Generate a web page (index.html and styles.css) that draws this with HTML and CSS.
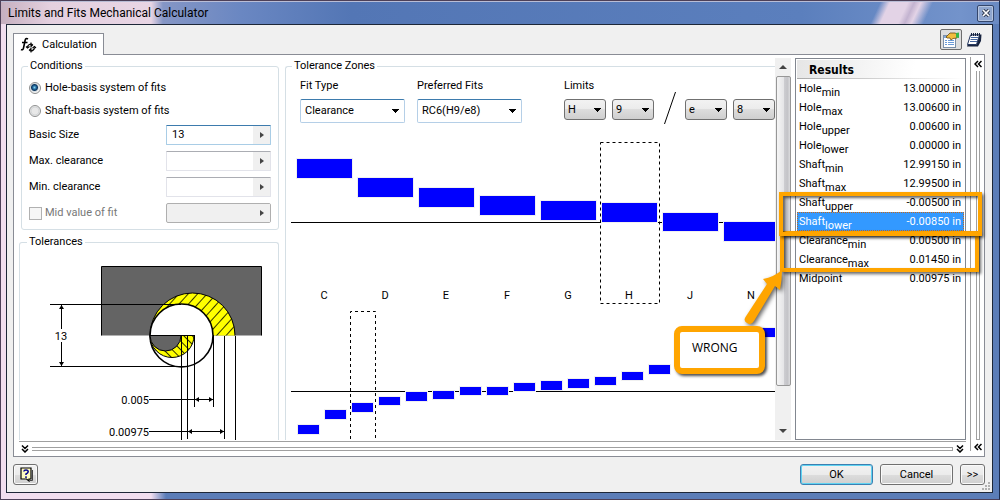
FILE: index.html
```
<!DOCTYPE html>
<html lang="en">
<head>
<meta charset="utf-8">
<title>Limits and Fits Mechanical Calculator</title>
<link rel="stylesheet" href="styles.css">
</head>
<body>
<div class="window">
  <header class="titlebar">
    <h1 class="title">Limits and Fits Mechanical Calculator</h1>
    <button class="close" aria-label="Close"><svg width="8" height="8" viewBox="0 0 8 8"><path d="M1 1L7 7M7 1L1 7" stroke="#333c50" stroke-width="3.4"/><path d="M1 1L7 7M7 1L1 7" stroke="#fff" stroke-width="1.6"/></svg></button>
  </header>

  <div class="dialog">
    <div class="tabrow">
      <button class="tab">
        <svg width="17" height="16" viewBox="0 0 17 16" fill="none" stroke="#000"><path d="M8 2Q5.500 .5 5 4L3.500 11Q3 13.500 1 12.500M2 5.500H7.500" stroke-width="1.600"/><path d="M7.500 10A3.500 3.500 0 0 1 12.500 7.500M14.500 10.500A3.500 3.500 0 0 1 9.500 13.500" stroke-width="1.300"/><path d="M6 9.500L7.500 11L9.500 9.500M12.500 11L14.500 9.500L16 11M11 5.500V9.500L13 7.500M11 15.500V11.500L9 13.500" stroke-width="1.100"/></svg>
        <span>Calculation</span>
      </button>
      <div class="tools">
        <button class="tool pressed" aria-label="Show results"><svg width="18" height="16" viewBox="0 0 18 16"><rect x="1.500" y="3.500" width="12" height="12" fill="#fff" stroke="#7b8fa8"/><rect x="2" y="4" width="11" height="2" fill="#84a8d8"/><path d="M3 8.500H5M3 10.500H5M3 12.500H5M6 8.500H12M6 10.500H12M6 12.500H12" stroke="#6b9bd8"/><path d="M4 5L8 1L13 1L15 2V6L11 6.500L9 8L8 6H5Z" fill="#f2bd3e" stroke="#6b4a10" stroke-width=".8"/><path d="M14 1L17 .5V6L14 5.500Z" fill="#35b54a"/></svg></button>
        <button class="tool" aria-label="Report"><svg width="16" height="16" viewBox="0 0 16 16"><path d="M5 2.500H15.500L15 9L12 14.500H1Z" fill="#17233f"/><path d="M4.500 3H13.500L10.500 12.500H1.500Z" fill="#fff" stroke="#25375f"/><path d="M5 5.500H12M4.500 7.500H11.500M4 9.500H11" stroke="#46669e"/><path d="M5.500 1V4M7.500 1V4M9.500 1V4M11.500 1V4M13.500 1V4" stroke="#17233f"/></svg></button>
      </div>
    </div>

    <main class="page">
      <div class="work">
        <div class="columns">
          <div class="left">
            <fieldset class="group conditions">
              <legend>Conditions</legend>
              <label class="choice"><input type="radio" name="basis" checked>Hole-basis system of fits</label>
              <label class="choice"><input type="radio" name="basis">Shaft-basis system of fits</label>
              <div class="field"><label for="basic">Basic Size</label><span class="edit active"><input id="basic" type="text" value="13"><button aria-label="Basic size options"></button></span></div>
              <div class="field"><label for="maxc">Max. clearance</label><span class="edit"><input id="maxc" type="text"><button aria-label="Max clearance options"></button></span></div>
              <div class="field"><label for="minc">Min. clearance</label><span class="edit"><input id="minc" type="text"><button aria-label="Min clearance options"></button></span></div>
              <div class="field off"><label class="check"><input type="checkbox" disabled>Mid value of fit</label><span class="edit"><input type="text" aria-label="Mid value" disabled><button aria-label="Mid value options" disabled></button></span></div>
            </fieldset>
            <fieldset class="group tolerances">
              <legend>Tolerances</legend>
              <svg class="drawing" width="240" height="191" viewBox="29 250 240 191" role="img" aria-label="Tolerance diagram">
                <defs>
                  <pattern id="hatchA" width="7" height="7" patternUnits="userSpaceOnUse" patternTransform="rotate(42)"><rect width="7" height="7" fill="#ff0"/><path d="M0 0V7" stroke="#000" stroke-width="1.600"/></pattern>
                  <pattern id="hatchB" width="6" height="6" patternUnits="userSpaceOnUse" patternTransform="rotate(-45)"><rect width="6" height="6" fill="#ff0"/><path d="M0 0V6" stroke="#000" stroke-width="1.600"/></pattern>
                </defs>
                <path d="M101.500 335.500V266.500H261.500V335.500" fill="#646464" stroke="#000"/>
                <path d="M150 335.500A42.500 42.500 0 0 1 235 335.500Z" fill="url(#hatchA)"/>
                <path d="M150 335.500A42.500 42.500 0 0 1 235 335.500" fill="none" stroke="#000"/>
                <circle cx="181.500" cy="335.500" r="31.500" fill="#fff" stroke="#000" stroke-width="1.600"/>
                <path d="M150 335.500A22 22 0 0 0 194 335.500Z" fill="url(#hatchB)" stroke="#000"/>
                <path d="M150 335.500A15.500 15.500 0 0 0 181 335.500Z" fill="#646464" stroke="#000"/>
                <path d="M50 304.500H181M50 366.500H187M61.500 305V329M61.500 342V366M181.500 335V441M187.500 335V439M194.500 335V407M213.500 335V407M224.500 336V439M235.500 336V441M149 399.500H213M149 431.500H224" fill="none" stroke="#000"/>
                <path d="M61.500 305L59 309H64ZM61.500 366L59 362H64ZM195 399.500L199 397V402ZM213 399.500L209 397V402ZM188 431.500L192 429V434ZM224 431.500L220 429V434Z"/>
                <text x="61" y="340" text-anchor="middle">13</text>
                <text x="149" y="404" text-anchor="end">0.005</text>
                <text x="149" y="436" text-anchor="end">0.00975</text>
              </svg>
            </fieldset>
          </div>

          <fieldset class="group zones">
            <legend>Tolerance Zones</legend>
            <div class="pickers">
              <label class="pick wide">Fit Type<select><option>Clearance</option></select></label>
              <label class="pick wide">Preferred Fits<select><option>RC6(H9/e8)</option></select></label>
              <div class="pick limits"><span>Limits</span>
                <div class="limitrow">
                  <select aria-label="Hole zone"><option>H</option></select>
                  <select aria-label="Hole grade"><option>9</option></select>
                  <svg class="slash" width="12" height="32" viewBox="0 0 12 32"><path d="M.5 32L11.500 0" stroke="#000"/></svg>
                  <select aria-label="Shaft zone"><option>e</option></select>
                  <select aria-label="Shaft grade"><option>8</option></select>
                </div>
              </div>
            </div>
            <svg class="chart" width="484" height="301" viewBox="291 140 484 301" role="img" aria-label="Hole and shaft tolerance zones">
              <path d="M291 222.500H775M291 391.500H775" stroke="#000"/>
              <path d="M600.500 142.500H659.500V303.500H600.500ZM350.500 445V311.500H375.500V445" fill="none" stroke="#000" stroke-dasharray="3 3"/>
              <g fill="#00f" stroke="#f0f0f0" stroke-width="2" paint-order="stroke">
                <rect x="297" y="159" width="55" height="19"/><rect x="358" y="178" width="55" height="19"/><rect x="419" y="188" width="55" height="19"/><rect x="480" y="196" width="55" height="19"/><rect x="541" y="201" width="55" height="19"/><rect x="602" y="203" width="55" height="19"/><rect x="663" y="213" width="55" height="18"/><rect x="724" y="222" width="55" height="19"/>
                <rect x="298" y="425" width="21" height="9"/><rect x="325" y="410" width="21" height="9"/><rect x="352" y="403" width="21" height="9"/><rect x="379" y="397" width="21" height="8"/><rect x="406" y="392" width="21" height="9"/><rect x="433" y="391" width="21" height="8"/><rect x="460" y="387" width="21" height="8"/><rect x="487" y="387" width="21" height="8"/><rect x="514" y="383" width="21" height="8"/><rect x="541" y="381" width="21" height="9"/><rect x="568" y="379" width="21" height="9"/><rect x="595" y="377" width="21" height="8"/><rect x="622" y="372" width="21" height="8"/><rect x="649" y="365" width="21" height="9"/><rect x="757" y="328" width="21" height="9"/>
              </g>
              <g text-anchor="middle"><text x="324" y="299">C</text><text x="385" y="299">D</text><text x="446" y="299">E</text><text x="507" y="299">F</text><text x="568" y="299">G</text><text x="629" y="299">H</text><text x="690" y="299">J</text><text x="751" y="299">N</text></g>
            </svg>
          </fieldset>

          <div class="scrollbar" aria-hidden="true"><i class="up"></i><div class="thumb"></div><i class="down"></i></div>

          <section class="results">
            <h2>Results</h2>
            <table>
              <tr><th>Hole<sub>min</sub></th><td>13.00000 in</td></tr>
              <tr><th>Hole<sub>max</sub></th><td>13.00600 in</td></tr>
              <tr><th>Hole<sub>upper</sub></th><td>0.00600 in</td></tr>
              <tr><th>Hole<sub>lower</sub></th><td>0.00000 in</td></tr>
              <tr><th>Shaft<sub>min</sub></th><td>12.99150 in</td></tr>
              <tr><th>Shaft<sub>max</sub></th><td>12.99500 in</td></tr>
              <tr><th>Shaft<sub>upper</sub></th><td>-0.00500 in</td></tr>
              <tr class="selected"><th>Shaft<sub>lower</sub></th><td>-0.00850 in</td></tr>
              <tr><th>Clearance<sub>min</sub></th><td>0.00500 in</td></tr>
              <tr><th>Clearance<sub>max</sub></th><td>0.01450 in</td></tr>
              <tr><th>Midpoint</th><td>0.00975 in</td></tr>
            </table>
          </section>
        </div>
        <div class="hsplit">
          <svg width="8" height="8" viewBox="0 0 8 8"><path d="M1 .5L4 3.500L7 .5M1 4L4 7L7 4" fill="none" stroke="#000" stroke-width="1.500"/></svg>
          <span class="hgrip"></span>
          <svg width="8" height="8" viewBox="0 0 8 8"><path d="M1 .5L4 3.500L7 .5M1 4L4 7L7 4" fill="none" stroke="#000" stroke-width="1.500"/></svg>
        </div>
      </div>
      <div class="vsplit">
        <svg width="8" height="8" viewBox="0 0 8 8"><path d="M4 1L1 4L4 7M7.500 1L4.500 4L7.500 7" fill="none" stroke="#000" stroke-width="1.500"/></svg>
        <span class="vgrip"></span>
        <svg width="8" height="8" viewBox="0 0 8 8"><path d="M4 1L1 4L4 7M7.500 1L4.500 4L7.500 7" fill="none" stroke="#000" stroke-width="1.500"/></svg>
      </div>
    </main>

    <footer class="footer">
      <button class="btn help" aria-label="Help"><svg width="14" height="15" viewBox="0 0 14 15"><path d="M2 1H12V12H10V14L7.500 12H2Z" fill="#fffbc0" stroke="#000" stroke-width="1.200"/><path d="M13.500 3V13.500H11" fill="none" stroke="#444"/><path d="M4.800 4.500Q5 3 7 3Q9.200 3 9.200 4.800Q9.200 6 7 7V8M7 9.300V11" fill="none" stroke="#000090" stroke-width="1.500"/></svg></button>
      <span class="space"></span>
      <button class="btn ok">OK</button>
      <button class="btn">Cancel</button>
      <button class="btn more">&gt;&gt;</button>
      <svg class="grip" width="8" height="8" viewBox="0 0 8 8" fill="#b0b0b0"><path d="M6 0h2v2h-2zM3 3h2v2h-2zM6 3h2v2h-2zM0 6h2v2h-2zM3 6h2v2h-2zM6 6h2v2h-2z"/></svg>
    </footer>
  </div>

  <div class="mark mark-clearance"></div>
  <div class="mark mark-shaft"></div>
  <svg class="arrow" width="50" height="60" viewBox="740 268 50 60"><path d="M745.500 317L767 284L763 279Q774 277 782 270Q782 280 780 290L775 286L754 321Q751 326 747 323Q743 321 745.500 317Z" fill="#ffa500"/></svg>
  <div class="callout">WRONG</div>
</div>
</body>
</html>
```
FILE: styles.css
```
* { box-sizing: border-box; }
body {
  margin: 0;
  font: 11px/14px Roboto, "Liberation Sans", sans-serif;
  color: #000;
}
button, input, select { font: inherit; color: inherit; }
button { padding: 0; border: 0; background: none; }
svg { display: block; flex: none; }

.window {
  position: relative;
  display: flex;
  flex-direction: column;
  height: 100vh;
  padding: 0 6px 6px 5px;
  overflow: hidden;
  border: 1px solid #4d4058;
  border-right-color: #1c2c50;
  background: linear-gradient(90deg, #f1deef 0, #f1deef 150px, #5b7db8 165px, #5b7db8 100%);
}
.titlebar {
  display: flex;
  align-items: center;
  justify-content: space-between;
  height: 23px;
  margin: 0 -6px 0 -5px;
  padding: 0 5px 0 7px;
  border-top: 1px solid #b9bdd6;
  background:
    linear-gradient(115deg, transparent 797px, #e3d3e6 806px, #e3d3e6 822px, #c3b3d0 828px, #e3d3e6 834px, transparent 845px),
    linear-gradient(90deg, #c6b0c0 0, #e4d0df 50px, #e8d5e4 150px, #8596c5 162px, #6a87c2 240px, #5376b5 350px, #5b7fbd 800px, #7393cb 960px, #6a8ac3 100%);
}
.title { margin: 0; font-weight: normal; font-size: 12px; line-height: 16px; }
.close {
  display: grid;
  place-items: center;
  width: 17px;
  height: 17px;
  border: 1px solid #34466c;
  border-radius: 2px;
  background: #8fa6cf;
  box-shadow: inset 0 0 0 1px #b6c5e0;
}

.dialog {
  flex: 1;
  min-height: 0;
  display: flex;
  flex-direction: column;
  padding: 0 7px 0 6px;
  border: 1px solid #1d2738;
  background: #f0f0f0;
}
.tabrow { flex: none; display: flex; justify-content: space-between; align-items: flex-end; height: 29px; }
.tab {
  position: relative;
  z-index: 1;
  display: flex;
  align-items: center;
  gap: 5px;
  height: 22px;
  margin-bottom: -1px;
  padding: 0 6px;
  border: 1px solid #898c95;
  border-bottom: 0;
  background: #fff;
}
.tools { display: flex; gap: 1px; padding-bottom: 4px; }
.tool { display: grid; place-items: center; width: 22px; height: 21px; }
.pressed { border: 1px solid #6d6d6d; border-radius: 2px; background: #dedede; }

.page {
  flex: 1;
  min-height: 0;
  display: flex;
  border: 1px solid #898c95;
  background: #fff;
}
.work { flex: 1; min-width: 0; display: flex; flex-direction: column; padding: 3px 4px 0 5px; }
.columns { flex: 1; min-height: 0; display: flex; overflow: hidden; }
.left { width: 260px; margin-right: 6px; display: flex; flex-direction: column; gap: 4px; }
.group { min-width: 0; margin: 0; padding: 0 7px; border: 1px solid #d5dfe5; border-radius: 3px; }
legend { margin: 0; padding: 0 2px; line-height: 16px; }
.conditions { flex: none; height: 172px; margin-left: 2px; }
.conditions legend { margin-left: -1px; }
.choice { display: flex; align-items: center; height: 23px; gap: 4px; white-space: nowrap; }
.conditions legend + .choice { margin-top: 2px; }
.choice input {
  appearance: none;
  width: 12px;
  height: 12px;
  margin: 0;
  border: 1px solid #8e8f8f;
  border-radius: 50%;
  background: radial-gradient(circle, #e8e8e8 3px, #cfd2d4 4px, #f4f4f4 5px);
}
.choice input:checked { background: radial-gradient(circle at 45% 45%, #7fd2ef 0, #1b5e94 2px, #10395f 3px, #d6dde2 4px, #f4f4f4 5px); }
.field { display: flex; align-items: center; justify-content: space-between; height: 26px; }
.edit {
  display: flex;
  width: 105px;
  height: 20px;
  border: 1px solid #e2e3ea;
  border-top-color: #abadb3;
  border-radius: 1px;
}
.edit input { flex: 1; min-width: 0; padding: 0 5px; border: 0; background: none; }
.edit button { display: grid; place-items: center; width: 17px; background: #f0f0f0; }
.edit button::after { content: ""; border: 3px solid transparent; border-left: 4px solid #444; border-right: 0; }
.active { border-color: #a9cde6; border-top-color: #3d7bad; }
.off { color: #777; }
.off .edit { border-color: #afafaf; background: #f0f0f0; border-radius: 2px; }
.check { display: flex; align-items: center; gap: 3px; }
.check input { appearance: none; width: 13px; height: 13px; margin: 0; border: 1px solid #b1b1b1; background: #f6f6f6; }
.tolerances { flex: 1; min-height: 0; overflow: hidden; border-bottom: 0; border-radius: 3px 3px 0 0; }
.drawing { margin-left: 2px; }

.zones { flex: 1; overflow: hidden; padding: 0 0 0 5px; border-right: 0; border-bottom: 0; border-radius: 3px 0 0 0; }
.zones legend { margin-left: 1px; }
.pickers { display: flex; gap: 12px; padding: 5px 0 0 9px; height: 66px; }
.pick { display: flex; flex-direction: column; gap: 6px; }
.wide { width: 105px; }
.pick select {
  appearance: none;
  width: 105px;
  height: 24px;
  padding: 0 4px;
  border: 1px solid #b5cfe7;
  border-top-color: #3d7bad;
  border-radius: 2px;
  background:
    no-repeat right 5px center / 7px 4px conic-gradient(from -60deg at 50% 100%, #000 120deg, transparent 0),
    #fff;
  background:
    no-repeat right 5px center / 7px 4px conic-gradient(from -45deg at 50% 100%, #000 90deg, transparent 0),
    #fff;
}
.limits { margin-left: 30px; }
.limitrow { display: flex; gap: 6px; }
.pick .limitrow select {
  width: 42px;
  height: 21px;
  padding: 0 3px;
  border: 1px solid #707070;
  border-radius: 3px;
  background:
    no-repeat right 4px center / 7px 4px conic-gradient(from -45deg at 50% 100%, #000 90deg, transparent 0),
    linear-gradient(#f2f2f2, #ebebeb 50%, #ddd 50%, #cfcfcf);
}
.slash { margin: -7px 3px -4px 4px; }

.scrollbar {
  display: flex;
  flex-direction: column;
  align-items: center;
  width: 16px;
  margin-right: 4px;
  background: #f0f0f0;
}
.up, .down { margin: 7px 0; border: 4px solid transparent; }
.up { border-top: 0; border-bottom-color: #444; }
.down { border-bottom: 0; border-top-color: #444; }
.thumb {
  flex: 1;
  width: 15px;
  margin-bottom: 36px;
  border: 1px solid #979797;
  border-radius: 2px;
  background: linear-gradient(90deg, #f5f5f5, #e6e6e8 50%, #cdcdd1 55%, #c4c4c8 80%, #dcdcde);
}

.results { width: 171px; padding: 1px; border: 1px solid #828790; }
.results h2 {
  height: 19px;
  margin: 0;
  padding: 0 12px;
  font: bold 12px/20px "DejaVu Sans Condensed", sans-serif;
  background: linear-gradient(90deg, #aaa, #fff) no-repeat bottom / 100% 1px, linear-gradient(100deg, #e6e6e6, #fff 70%);
}
.results table { width: 100%; border-collapse: collapse; }
.results tr { height: 19px; }
.results th, .results td { padding: 0 3px 0 2px; font-weight: normal; text-align: left; vertical-align: middle; line-height: 14px; }
.results td { text-align: right; }
.results sub { font-size: 11px; line-height: 0; vertical-align: -4px; }
.selected { color: #fff; background: #3399ff; outline: 1px dotted #c56a1b; outline-offset: -1px; }

.hsplit {
  flex: none;
  display: flex;
  align-items: center;
  gap: 3px;
  height: 15px;
  margin: 1px 0 0;
  padding: 0 2px;
  border-top: 1px solid #a0a0a0;
}
.hgrip { flex: 1; height: 4px; border: 1px solid #a0a0a0; border-left: 0; }
.vsplit {
  display: flex;
  flex-direction: column;
  align-items: center;
  gap: 3px;
  width: 14px;
  margin: 2px 0 5px;
  padding: 3px 0 0;
  border-left: 1px solid #a0a0a0;
}
.vgrip { flex: 1; width: 4px; border: 1px solid #a0a0a0; border-top: 0; }

.footer { position: relative; flex: none; display: flex; align-items: center; gap: 7px; height: 35px; }
.space { flex: 1; }
.btn {
  display: grid;
  place-items: center;
  width: 73px;
  height: 21px;
  border: 1px solid #707070;
  border-radius: 3px;
  background: linear-gradient(#f2f2f2, #ebebeb 50%, #ddd 50%, #cfcfcf);
  box-shadow: inset 0 0 0 1px #fafafa;
}
.ok { border-color: #3c7fb1; box-shadow: inset 0 0 0 1px #5fd3f2; }
.help, .more { width: 25px; }
.grip { position: absolute; right: -5px; bottom: 2px; }

.mark { position: absolute; border: 4px solid #ffa500; box-shadow: 2px 2px 3px rgb(0 0 0 / 60%), inset 2px 2px 3px rgb(0 0 0 / 60%); }
.mark-shaft { top: 191px; right: 17px; width: 203px; height: 44px; }
.mark-clearance { top: 230px; right: 20px; width: 199px; height: 41px; }
.arrow { position: absolute; right: 209px; top: 267px; filter: drop-shadow(2px 2px 2px rgb(0 0 0 / 60%)); }
.callout {
  position: absolute;
  top: 325px;
  right: 234px;
  width: 91px;
  height: 48px;
  padding: 8px 12px;
  border: 6px solid #ffa500;
  border-radius: 8px;
  background: #fff;
  box-shadow: 2px 2px 3px rgb(0 0 0 / 70%);
  font: 12px/16px "Open Sans", sans-serif;
}
```
